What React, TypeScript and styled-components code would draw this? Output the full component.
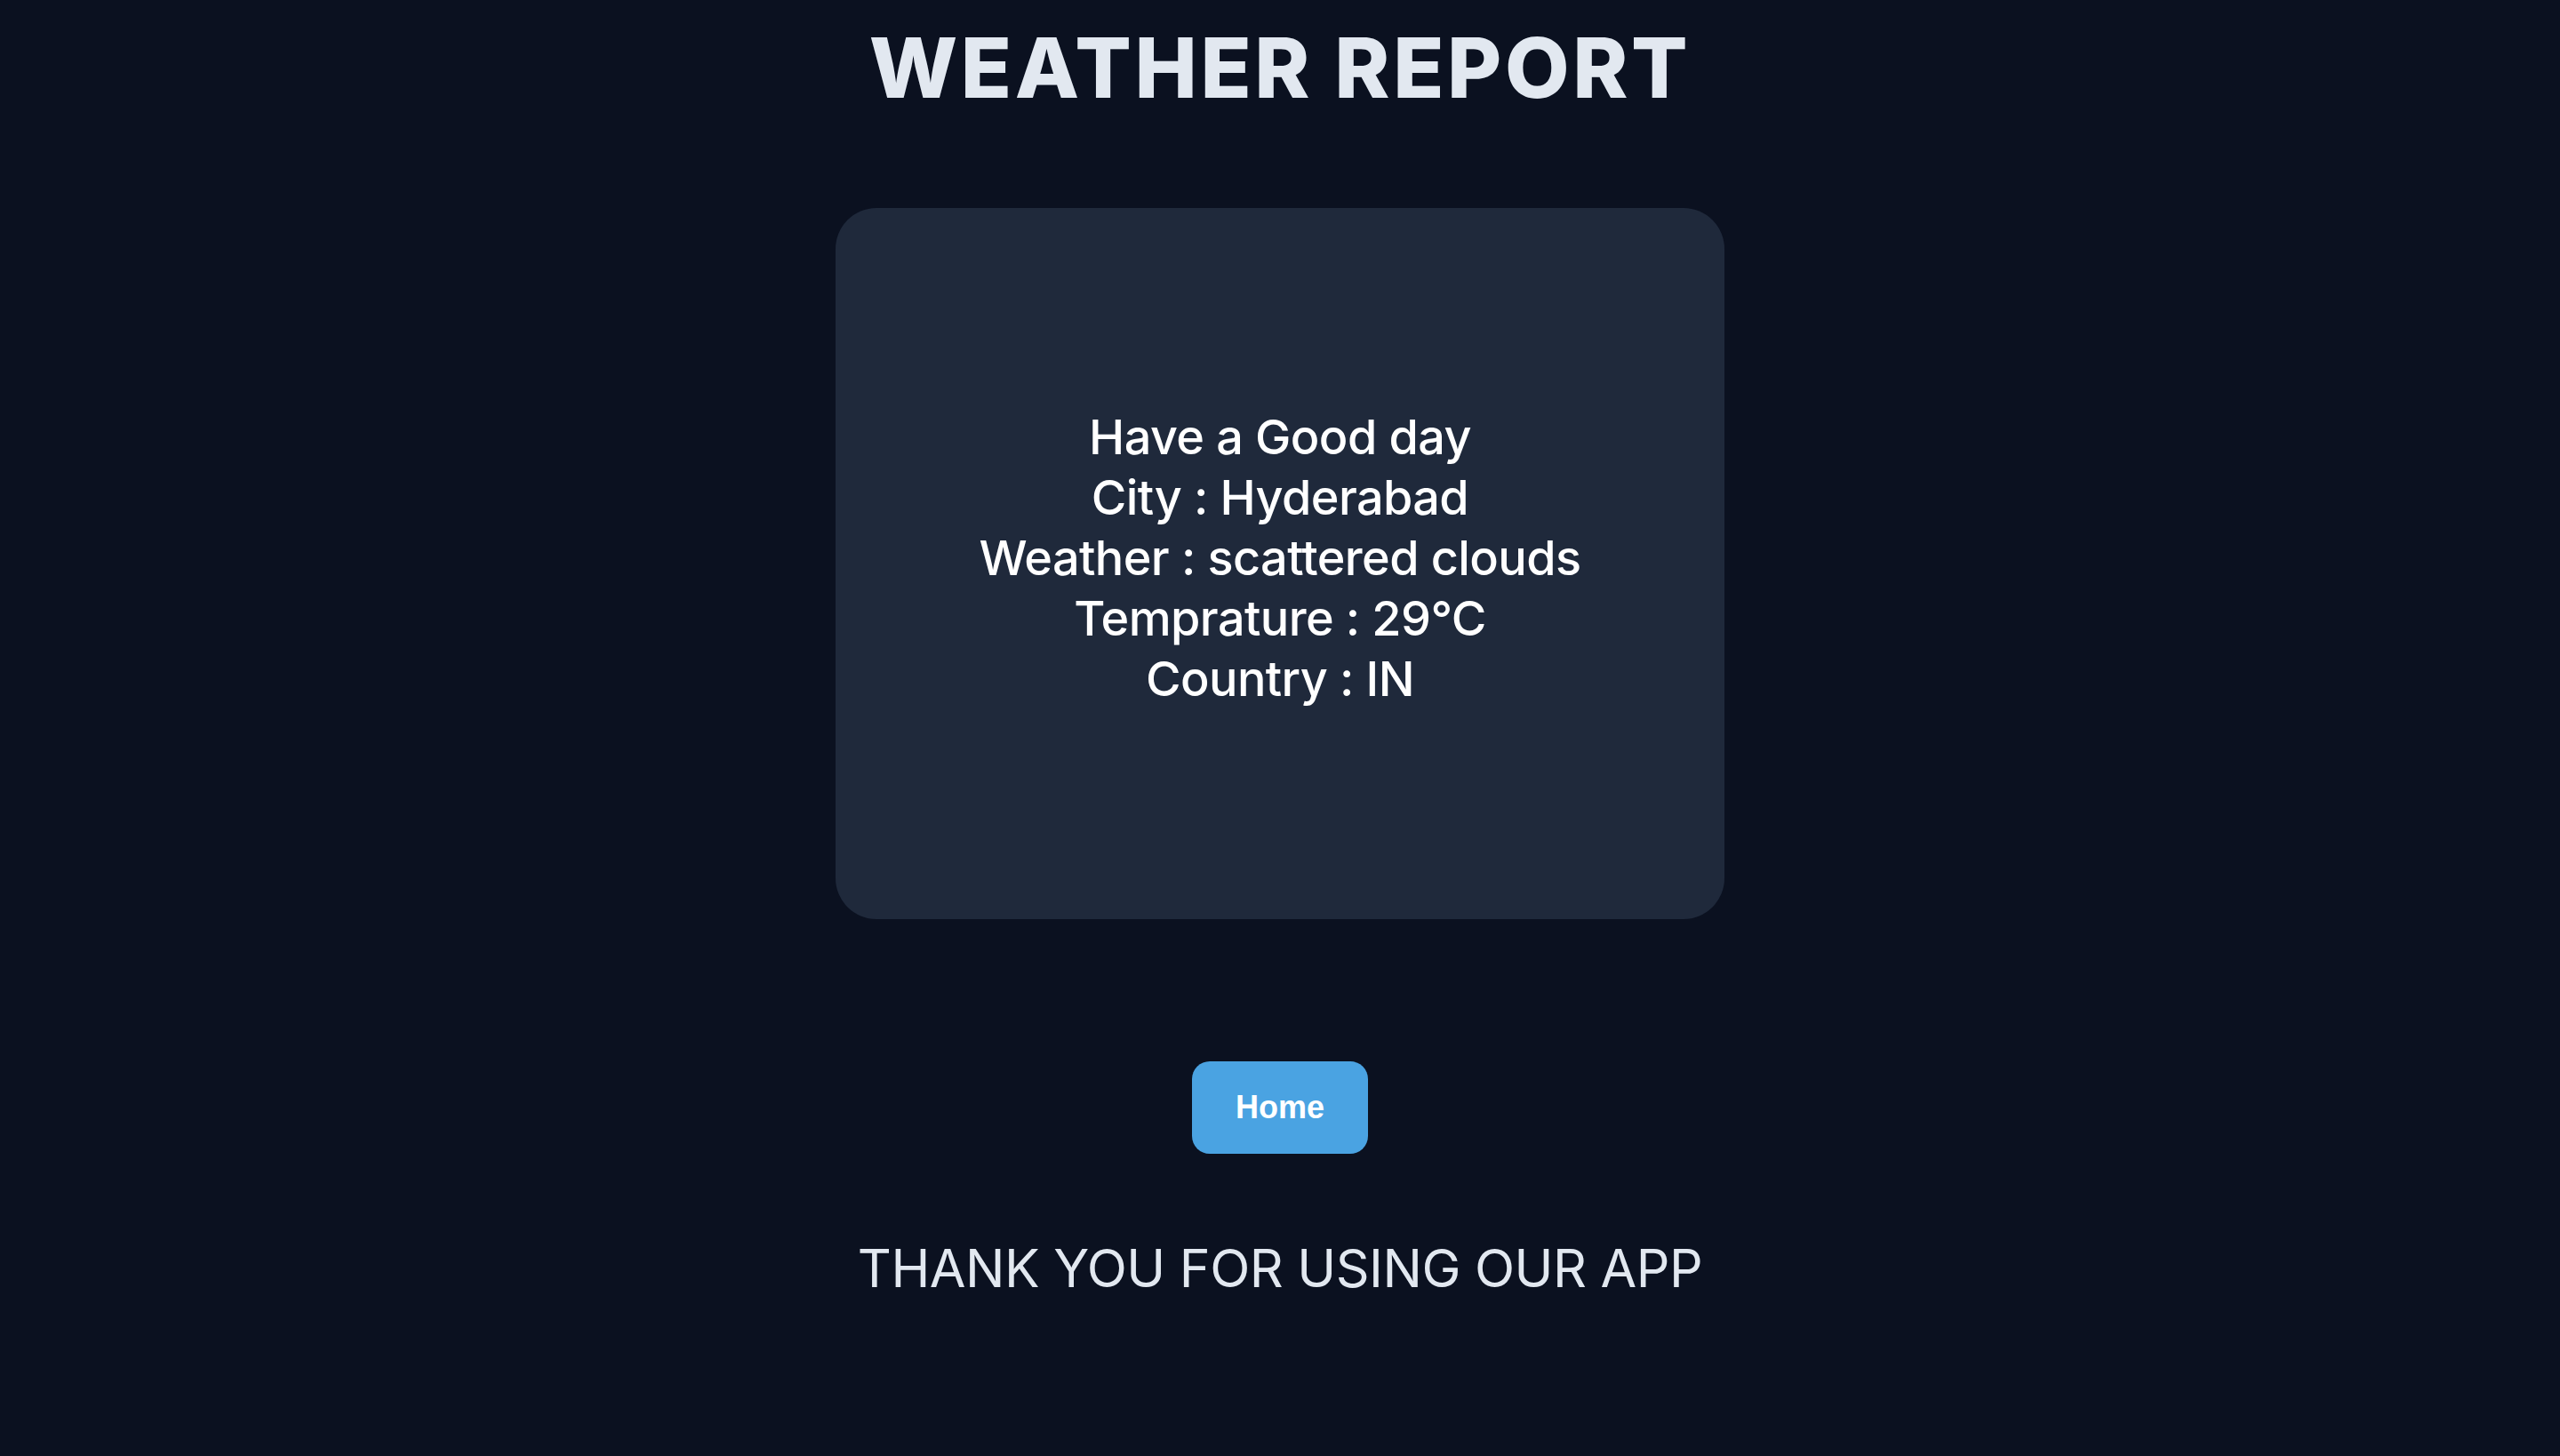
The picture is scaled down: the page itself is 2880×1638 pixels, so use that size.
import React from "react";
import styled, { createGlobalStyle } from "styled-components";

const Global = createGlobalStyle`
  html, body {
    margin: 0;
    padding: 0;
    background: #0b1120;
  }
  body {
    font-family: Inter, "Noto Sans", sans-serif;
  }
`;

const Page = styled.main`
  min-height: 1638px;
  display: flex;
  flex-direction: column;
  align-items: center;
  padding-top: 20px;
  box-sizing: border-box;
  background: #0b1120;
`;

const Title = styled.h1`
  margin: 0;
  font-family: Inter, sans-serif;
  font-weight: 800;
  font-size: 94px;
  line-height: 1.21;
  letter-spacing: 3.6px;
  color: #e2e8f0;
`;

const Card = styled.section`
  margin-top: 100px;
  width: 1000px;
  height: 800px;
  box-sizing: border-box;
  padding-bottom: 12px;
  border-radius: 46px;
  background: #1f293b;
  display: flex;
  flex-direction: column;
  align-items: center;
  justify-content: center;
`;

const Line = styled.div`
  font-family: Inter, sans-serif;
  font-size: 54px;
  line-height: 68px;
  font-weight: 500;
  letter-spacing: -0.6px;
  color: #ffffff;
  text-align: center;
`;

const HomeButton = styled.button`
  margin-top: 160px;
  width: 198px;
  height: 104px;
  border: none;
  border-radius: 20px;
  background: #4aa3e2;
  color: #ffffff;
  font-family: "Liberation Sans", Arial, sans-serif;
  font-weight: 700;
  font-size: 36px;
  cursor: pointer;
`;

const Thanks = styled.p`
  margin: 93px 0 0;
  font-family: Inter, sans-serif;
  font-size: 59px;
  line-height: 1.21;
  font-weight: 400;
  letter-spacing: -0.5px;
  color: #e2e8f0;
`;

const lines = [
  "Have a Good day",
  "City : Hyderabad",
  "Weather : scattered clouds",
  "Temprature : 29°C",
  "Country : IN",
];

export default function App() {
  return (
    <>
      <Global />
      <Page>
        <Title>WEATHER REPORT</Title>
        <Card>
          {lines.map((l) => (
            <Line key={l}>{l}</Line>
          ))}
        </Card>
        <HomeButton>Home</HomeButton>
        <Thanks>THANK YOU FOR USING OUR APP</Thanks>
      </Page>
    </>
  );
}
